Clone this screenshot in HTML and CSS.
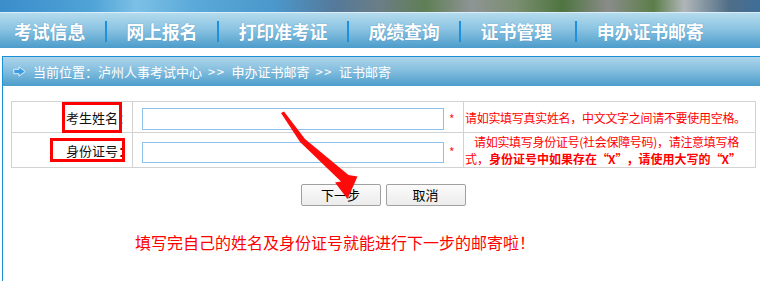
FILE: index.html
```html
<!DOCTYPE html>
<html lang="zh-CN">
<head>
<meta charset="utf-8">
<title>证书邮寄</title>
<link rel="stylesheet" href="styles.css">
</head>
<body>
<div class="page">
  <div class="banner"></div>
  <div class="banner-line"></div>
  <nav class="nav">
    <span class="nav-item">考试信息</span><span class="nav-sep"></span>
    <span class="nav-item">网上报名</span><span class="nav-sep"></span>
    <span class="nav-item">打印准考证</span><span class="nav-sep"></span>
    <span class="nav-item">成绩查询</span><span class="nav-sep"></span>
    <span class="nav-item">证书管理</span><span class="nav-sep nav-sep-wide"></span>
    <span class="nav-item">申办证书邮寄</span>
  </nav>
  <div class="panel">
    <div class="crumb">
      <svg class="crumb-icon" width="13" height="11" viewBox="0 0 13 11"><path d="M0.8 3.3 H6 V0.8 L12.2 5.5 L6 10.2 V7.7 H0.8 Z" fill="#3f9de4" stroke="#d8efff" stroke-width="1"/></svg>
      <span class="crumb-text">当前位置：泸州人事考试中心<span class="gt">&gt;&gt;</span>申办证书邮寄<span class="gt">&gt;&gt;</span>证书邮寄</span>
    </div>
    <table class="form">
      <tr class="row-1">
        <td class="label">考生姓名：</td>
        <td class="field"><span class="input"></span><span class="star">*</span></td>
        <td class="hint"><span class="line">请如实填写真实姓名，中文文字之间请不要使用空格。</span></td>
      </tr>
      <tr class="row-2">
        <td class="label">身份证号：</td>
        <td class="field"><span class="input"></span><span class="star">*</span></td>
        <td class="hint"><span class="line line-indent">请如实填写身份证号(社会保障号码)，请注意填写格</span><span class="line line-plain">式，<b>身份证号中如果存在<span class="q q-open">“</span>X<span class="q q-close">”</span>，请使用大写的<span class="q q-open">“</span>X<span class="q q-close">”</span></b></span></td>
      </tr>
    </table>
    <div class="buttons">
      <span class="btn">下一步</span>
      <span class="btn">取消</span>
    </div>
    <p class="note">填写完自己的姓名及身份证号就能进行下一步的邮寄啦！</p>
  </div>
  <span class="mark mark-1"></span>
  <span class="mark mark-2"></span>
  <svg class="arrow" width="760" height="281" viewBox="0 0 760 281">
    <polygon points="281,113 284,111.5 305,139 348.5,175 357.5,176.5 347.5,199 335,182.5 341,181.5 300,142" fill="#ff0a0a"/>
  </svg>
</div>
</body>
</html>
```

FILE: styles.css
```css
html, body {
  margin: 0;
  padding: 0;
  background: #ffffff;
}
body {
  font-family: "Noto Sans CJK SC", "Liberation Sans", sans-serif;
  width: 760px;
  height: 281px;
  overflow: hidden;
}
.page {
  position: relative;
  width: 760px;
  height: 281px;
  overflow: hidden;
}
.banner {
  height: 12px;
  background: linear-gradient(90deg, #3a8dca 0%, #4fa3d6 12%, #7cc0e6 18%, #58a8d8 26%, #4b98cc 36%, #55799a 44%, #6b7d86 50%, #5f7f55 56%, #8e9494 62%, #7a8e70 68%, #4f7440 74%, #8a8c8a 80%, #5c7e48 86%, #b0b6b8 90%, #4f6d86 96%, #3e6e9a 100%);
}
.banner-line {
  height: 1px;
  background: #d8eef8;
}
.nav {
  height: 35px;
  display: flex;
  align-items: center;
  gap: 19.5px;
  padding-left: 14px;
  background: linear-gradient(180deg, #b4dbed 0%, #8cc4e2 45%, #4c9ccb 100%);
}
.nav-item {
  font-size: 18px;
  font-weight: 700;
  color: #ffffff;
  line-height: 20px;
  text-shadow: 0 0 1px #3f86b8;
  letter-spacing: -0.2px;
}
.nav-sep {
  width: 2px;
  height: 21px;
  background: #1f90dc;
  margin-top: 2px;
}
.nav-sep-wide {
  margin-left: 4px;
}
.panel {
  margin-top: 8px;
  margin-left: 2px;
  border-top: 1px solid #1b8ed8;
  border-left: 1px solid #1b8ed8;
  height: 230px;
}
.crumb {
  height: 29px;
  display: flex;
  align-items: center;
  padding-left: 10px;
  background: linear-gradient(180deg, #acd5ea 0%, #86bfdf 45%, #4c9dcb 100%);
}
.crumb-icon {
  display: block;
  margin-right: 7px;
}
.crumb-text {
  font-size: 13px;
  color: #ffffff;
  line-height: 16px;
}
.gt {
  display: inline-block;
  padding: 0 6px;
  letter-spacing: 1.5px;
}
.form {
  margin-top: 15px;
  margin-left: 8px;
  width: 744px;
  border-collapse: collapse;
  table-layout: fixed;
}
.form td {
  border: 1px solid #d2d2d2;
  padding: 0;
}
.label {
  width: 119px;
  padding-right: 1px !important;
  text-align: right;
  font-size: 13px;
  color: #111111;
  white-space: nowrap;
}
.field {
  width: 321px;
  padding-left: 9px !important;
  white-space: nowrap;
}
.hint {
  width: 290px;
  padding-left: 1px !important;
  color: #ff0000;
  font-size: 12px;
  line-height: 17px;
}
.row-1 td {
  height: 30px;
}
.row-2 td {
  height: 32px;
}
.input {
  display: inline-block;
  vertical-align: middle;
  width: 300px;
  height: 20px;
  border: 1px solid #8ec0ea;
  background: #ffffff;
}
.row-2 .input {
  height: 19px;
}
.star {
  display: inline-block;
  vertical-align: middle;
  margin-left: 5px;
  color: #ff2020;
  font-size: 12px;
  line-height: 12px;
}
.line {
  display: block;
  white-space: nowrap;
  letter-spacing: -0.3px;
}
.line-indent {
  padding-left: 9px;
}
.line-plain {
  letter-spacing: 0;
}
.q {
  display: inline-block;
  width: 11px;
}
.q-open {
  text-align: right;
}
.q-close {
  text-align: left;
}
.hint b {
  font-weight: 700;
}
.buttons {
  margin-top: 16px;
  margin-left: 8px;
  width: 744px;
  display: flex;
  justify-content: center;
  gap: 5px;
}
.btn {
  box-sizing: border-box;
  width: 80px;
  height: 22px;
  border: 1px solid #a0a0a0;
  border-radius: 2px;
  background: linear-gradient(180deg, #fbfbfb 0%, #ececec 100%);
  font-size: 13px;
  line-height: 20px;
  text-align: center;
  color: #000000;
}
.note {
  margin: 25px 0 0 0;
  padding-left: 132px;
  font-size: 16px;
  line-height: 22px;
  color: #ff0000;
}
.mark {
  position: absolute;
  box-sizing: border-box;
  border: 3px solid #ff0000;
}
.mark-1 {
  left: 62px;
  top: 102px;
  width: 60px;
  height: 31px;
}
.mark-2 {
  left: 50px;
  top: 138px;
  width: 75px;
  height: 24px;
}
.arrow {
  position: absolute;
  left: 0;
  top: 0;
  pointer-events: none;
}
```
